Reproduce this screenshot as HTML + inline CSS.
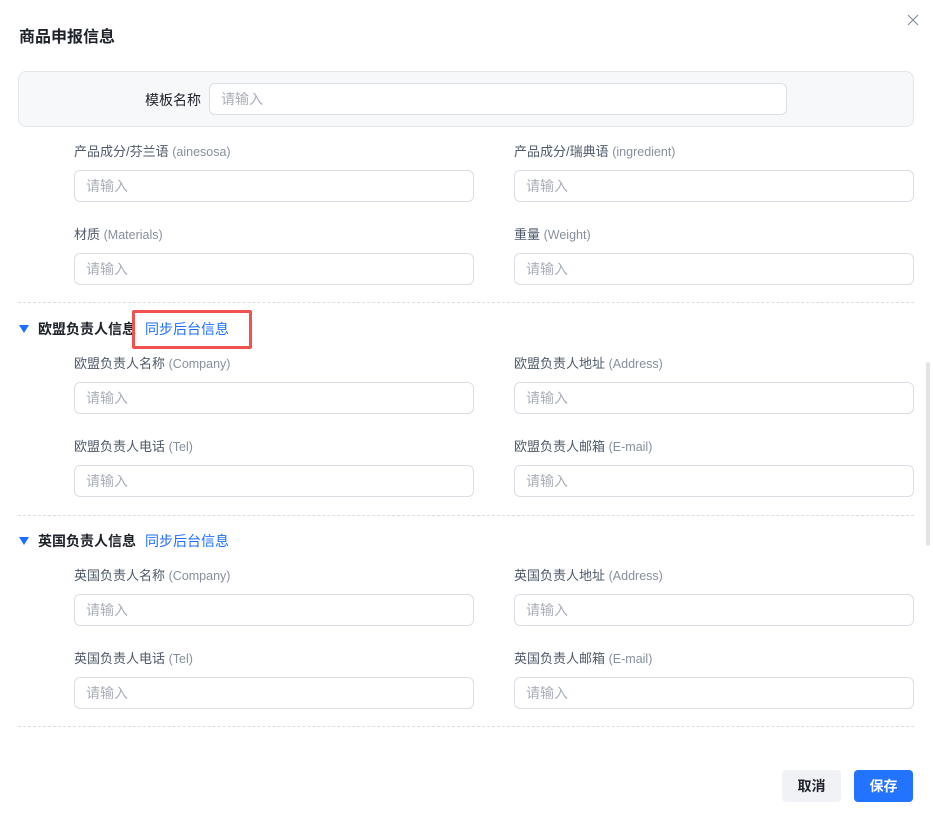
<!DOCTYPE html>
<html><head><meta charset="utf-8"><style>
*{box-sizing:border-box;margin:0;padding:0}
body{width:933px;height:821px;background:#fff;font-family:"Liberation Sans","Noto Sans CJK SC",sans-serif;position:relative;overflow:hidden;color:#1d2129}
.a{position:absolute}
.title{left:19px;top:23px;font-size:16px;font-weight:bold;color:#1d2129}
.close{left:906px;top:13px;width:14px;height:14px}
.tb{left:18px;top:71px;width:896px;height:56px;background:#f7f8fa;border:1px solid #e5e6eb;border-radius:8px}
.inp{height:32px;border:1px solid #dcdee6;border-radius:6px;background:#fff;font-size:14px;color:#a9aeb8;padding-left:11px;line-height:30px}
.lbl{font-size:13px;color:#4e5969;line-height:18px}
.lbl span{color:#86909c;font-size:12.5px}
.dash{left:18px;width:896px;border-top:1px dashed #dcdee6;height:0}
.sh{font-size:14px;font-weight:bold;color:#1d2129;line-height:20px}
.tri{width:0;height:0;border-left:5px solid transparent;border-right:5px solid transparent;border-top:8px solid #1e6fff}
.link{font-size:14px;color:#1e6fff;line-height:20px}
.btn{height:32px;width:59px;border-radius:4px;font-size:14px;font-weight:bold;text-align:center;line-height:32px}
</style></head><body>
<div class="a title">商品申报信息</div>
<svg class="a close" viewBox="0 0 14 14"><path d="M2 2L12 12M12 2L2 12" stroke="#86909c" stroke-width="1.2"/></svg>
<div class="a tb"></div>
<div class="a" style="left:145px;top:90px;font-size:14px;color:#1d2129;line-height:20px">模板名称</div>
<div class="a inp" style="left:209px;top:83px;width:578px">请输入</div>

<div class="a lbl" style="left:74px;top:143px">产品成分/芬兰语 <span>(ainesosa)</span></div>
<div class="a inp" style="left:74px;top:170px;width:400px">请输入</div>
<div class="a lbl" style="left:514px;top:143px">产品成分/瑞典语 <span>(ingredient)</span></div>
<div class="a inp" style="left:514px;top:170px;width:400px">请输入</div>
<div class="a lbl" style="left:74px;top:226px">材质 <span>(Materials)</span></div>
<div class="a inp" style="left:74px;top:253px;width:400px">请输入</div>
<div class="a lbl" style="left:514px;top:226px">重量 <span>(Weight)</span></div>
<div class="a inp" style="left:514px;top:253px;width:400px">请输入</div>
<div class="a dash" style="top:302px"></div>

<div class="a tri" style="left:19px;top:325px"></div>
<div class="a sh" style="left:38px;top:319px">欧盟负责人信息</div>
<div class="a link" style="left:145px;top:319px">同步后台信息</div>
<div class="a" style="left:132px;top:310px;width:120px;height:39px;border:3px solid #f0524f;border-radius:2px"></div>
<div class="a lbl" style="left:74px;top:355px">欧盟负责人名称 <span>(Company)</span></div>
<div class="a inp" style="left:74px;top:382px;width:400px">请输入</div>
<div class="a lbl" style="left:514px;top:355px">欧盟负责人地址 <span>(Address)</span></div>
<div class="a inp" style="left:514px;top:382px;width:400px">请输入</div>
<div class="a lbl" style="left:74px;top:438px">欧盟负责人电话 <span>(Tel)</span></div>
<div class="a inp" style="left:74px;top:465px;width:400px">请输入</div>
<div class="a lbl" style="left:514px;top:438px">欧盟负责人邮箱 <span>(E-mail)</span></div>
<div class="a inp" style="left:514px;top:465px;width:400px">请输入</div>
<div class="a dash" style="top:515px"></div>

<div class="a tri" style="left:19px;top:537px"></div>
<div class="a sh" style="left:38px;top:531px">英国负责人信息</div>
<div class="a link" style="left:145px;top:531px">同步后台信息</div>
<div class="a lbl" style="left:74px;top:567px">英国负责人名称 <span>(Company)</span></div>
<div class="a inp" style="left:74px;top:594px;width:400px">请输入</div>
<div class="a lbl" style="left:514px;top:567px">英国负责人地址 <span>(Address)</span></div>
<div class="a inp" style="left:514px;top:594px;width:400px">请输入</div>
<div class="a lbl" style="left:74px;top:650px">英国负责人电话 <span>(Tel)</span></div>
<div class="a inp" style="left:74px;top:677px;width:400px">请输入</div>
<div class="a lbl" style="left:514px;top:650px">英国负责人邮箱 <span>(E-mail)</span></div>
<div class="a inp" style="left:514px;top:677px;width:400px">请输入</div>
<div class="a dash" style="top:726px"></div>

<div class="a" style="left:926px;top:362px;width:4px;height:184px;background:#e3e4e8;border-radius:2px"></div>
<div class="a btn" style="left:782px;top:770px;background:#f0f2f6;color:#1d2129">取消</div>
<div class="a btn" style="left:854px;top:770px;background:#2273ff;color:#fff">保存</div>
</body></html>
